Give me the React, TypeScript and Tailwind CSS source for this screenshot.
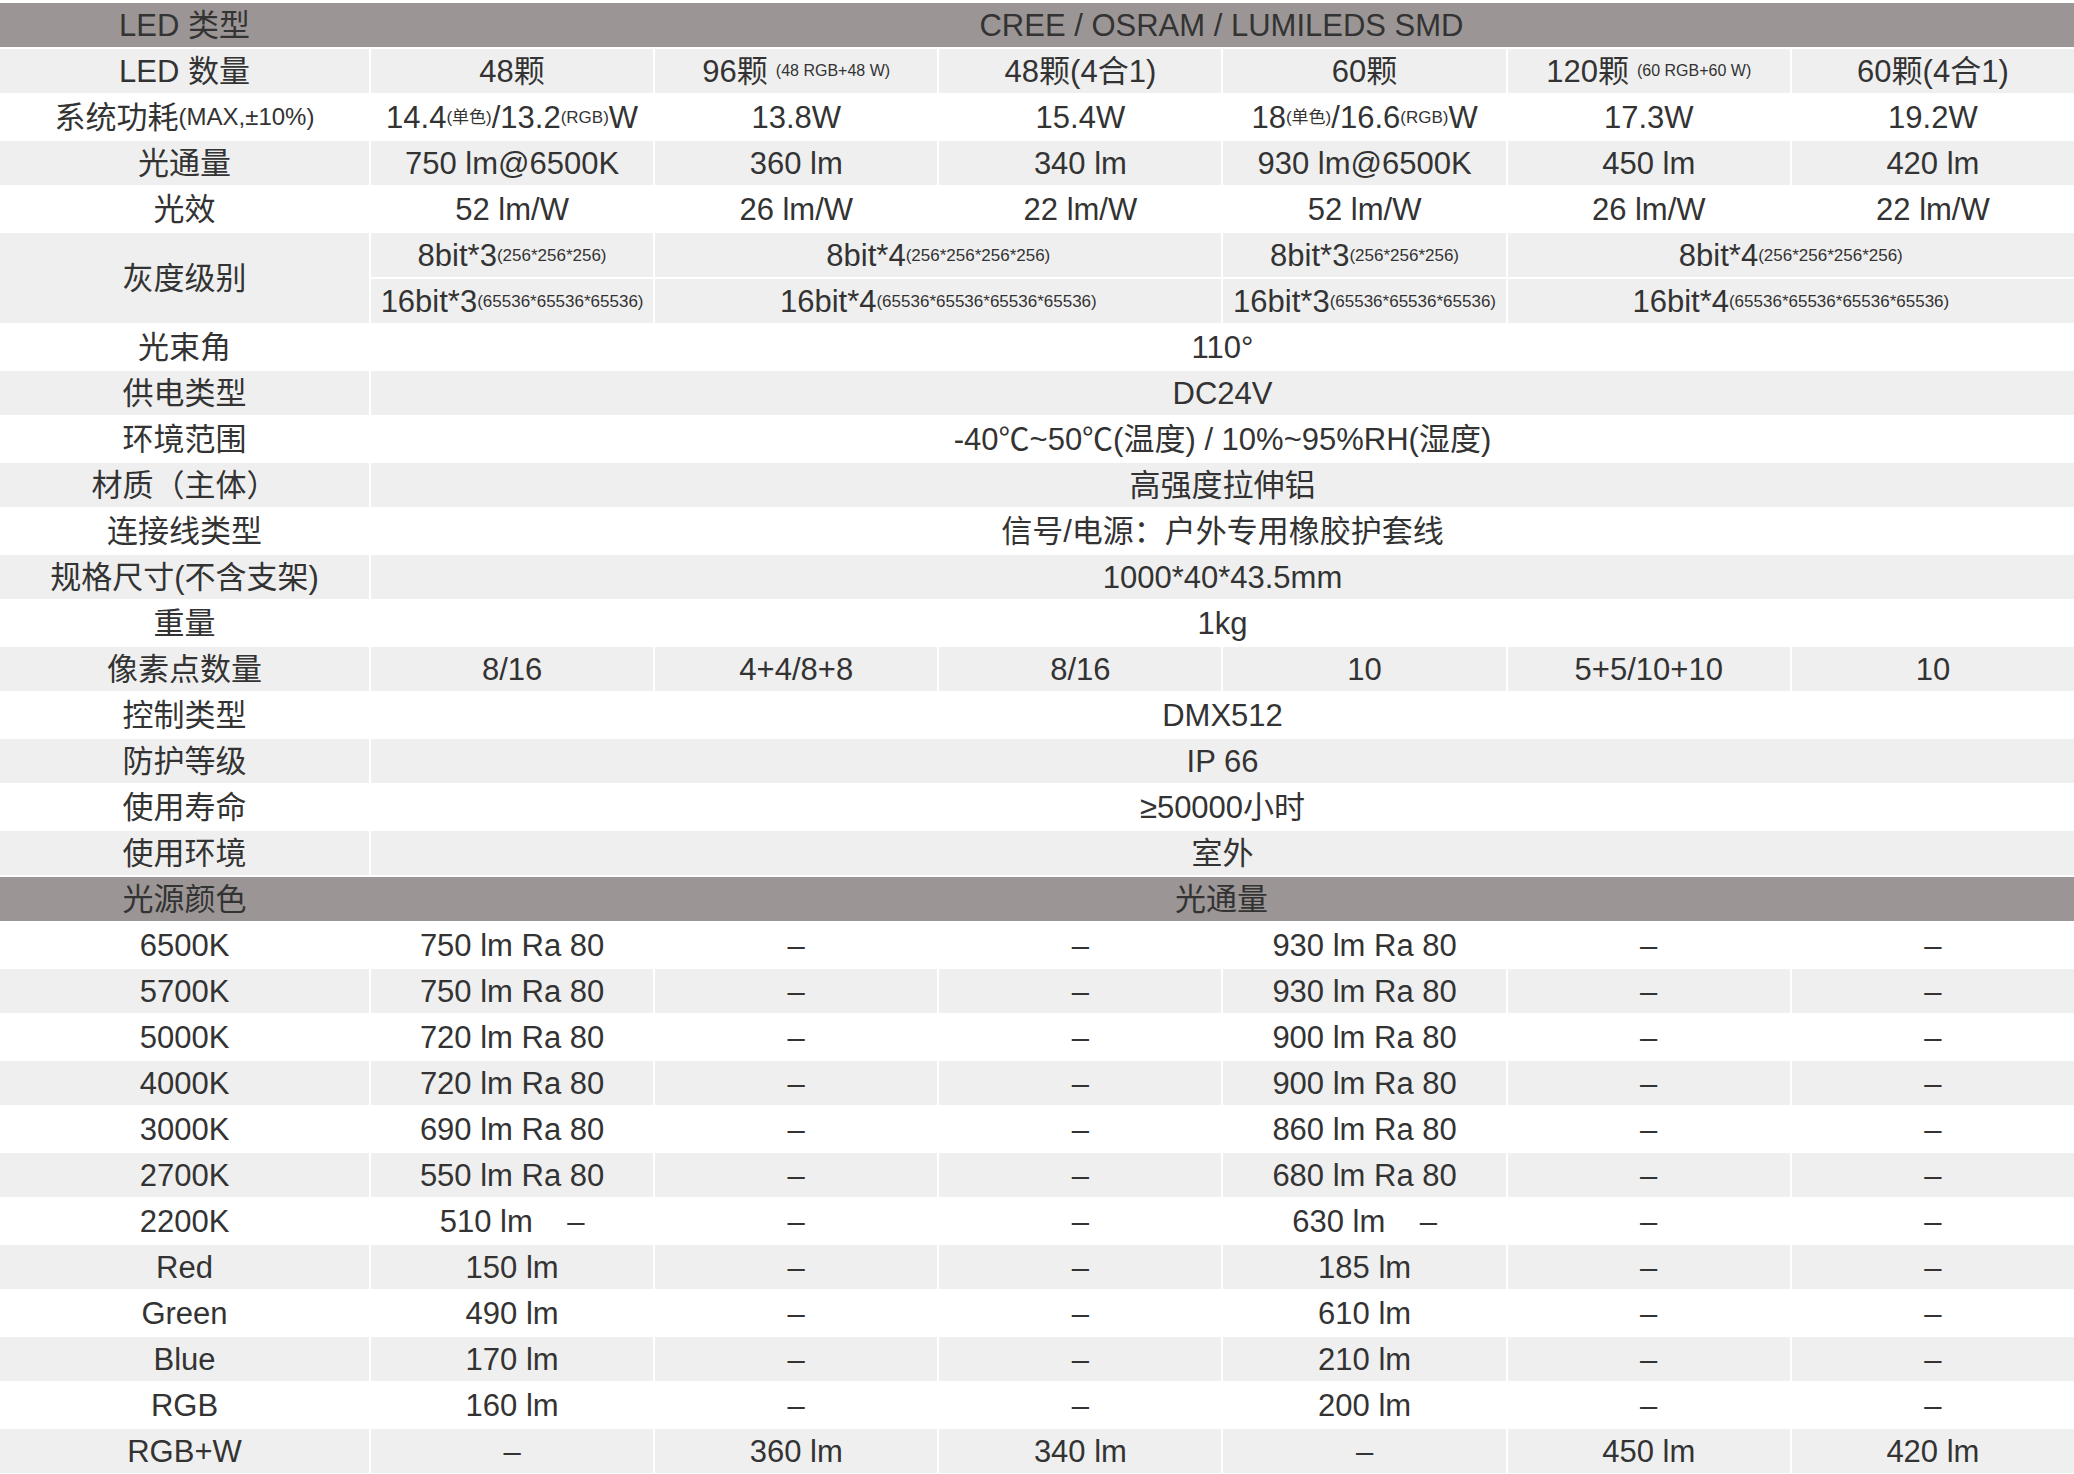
import React from 'react';

const G = 'bg-[#efefef]';
const W = 'bg-white';

type Cell = { t: React.ReactNode; span?: number };
type Row = { label: string; cells: Cell[]; bg: string };

const s = (t: string) => <span className="text-[17px]">{t}</span>;

const rows: Row[] = [
    { label: 'LED 数量', bg: G, cells: [{ t: '48颗' }, { t: <>96颗 <span className="text-[16px] ml-2">(48 RGB+48 W)</span></> }, { t: '48颗(4合1)' }, { t: '60颗' }, { t: <>120颗 <span className="text-[16px] ml-2">(60 RGB+60 W)</span></> }, { t: '60颗(4合1)' }] },
    { label: '系统功耗', bg: W, cells: [{ t: <>14.4{s('(单色)')}/13.2{s('(RGB)')}W</> }, { t: '13.8W' }, { t: '15.4W' }, { t: <>18{s('(单色)')}/16.6{s('(RGB)')}W</> }, { t: '17.3W' }, { t: '19.2W' }] },
    { label: '光通量', bg: G, cells: [{ t: '750 lm@6500K' }, { t: '360 lm' }, { t: '340 lm' }, { t: '930 lm@6500K' }, { t: '450 lm' }, { t: '420 lm' }] },
    { label: '光效', bg: W, cells: [{ t: '52 lm/W' }, { t: '26 lm/W' }, { t: '22 lm/W' }, { t: '52 lm/W' }, { t: '26 lm/W' }, { t: '22 lm/W' }] },
];

const single: [string, string, string][] = [
    ['光束角', '110°', W],
    ['供电类型', 'DC24V', G],
    ['环境范围', '-40℃~50℃(温度) / 10%~95%RH(湿度)', W],
    ['材质（主体）', '高强度拉伸铝', G],
    ['连接线类型', '信号/电源：户外专用橡胶护套线', W],
    ['规格尺寸(不含支架)', '1000*40*43.5mm', G],
    ['重量', '1kg', W],
];

const single2: [string, string, string][] = [
    ['控制类型', 'DMX512', W],
    ['防护等级', 'IP 66', G],
    ['使用寿命', '≥50000小时', W],
    ['使用环境', '室外', G],
];

const flux: [string, string[]][] = [
    ['6500K', ['750 lm Ra 80', '–', '–', '930 lm Ra 80', '–', '–']],
    ['5700K', ['750 lm Ra 80', '–', '–', '930 lm Ra 80', '–', '–']],
    ['5000K', ['720 lm Ra 80', '–', '–', '900 lm Ra 80', '–', '–']],
    ['4000K', ['720 lm Ra 80', '–', '–', '900 lm Ra 80', '–', '–']],
    ['3000K', ['690 lm Ra 80', '–', '–', '860 lm Ra 80', '–', '–']],
    ['2700K', ['550 lm Ra 80', '–', '–', '680 lm Ra 80', '–', '–']],
    ['2200K', ['510 lm\u00a0\u00a0\u00a0\u00a0–', '–', '–', '630 lm\u00a0\u00a0\u00a0\u00a0–', '–', '–']],
    ['Red', ['150 lm', '–', '–', '185 lm', '–', '–']],
    ['Green', ['490 lm', '–', '–', '610 lm', '–', '–']],
    ['Blue', ['170 lm', '–', '–', '210 lm', '–', '–']],
    ['RGB', ['160 lm', '–', '–', '200 lm', '–', '–']],
    ['RGB+W', ['–', '360 lm', '340 lm', '–', '450 lm', '420 lm']],
];

const cellCls = 'h-[44px] flex items-center justify-center whitespace-nowrap';

function Header({ label, text }: { label: string; text: string }) {
    return (
        <div className="col-span-7 h-[44px] bg-[#9b9695] grid grid-cols-[369px_1fr] items-center">
            <div className="text-center">{label}</div>
            <div className="text-center">{text}</div>
        </div>
    );
}

function Single({ label, text, bg }: { label: string; text: string; bg: string }) {
    return (
        <>
            <div className={`${cellCls} ${bg}`}>{label}</div>
            <div className={`${cellCls} ${bg} col-span-6`}>{text}</div>
        </>
    );
}

export default function App() {
    return (
        <div
            className="w-[2074px] pt-[3px] bg-white text-[#333] text-[31px] leading-none"
            style={{ fontFamily: '"Liberation Sans", "Noto Sans CJK SC", sans-serif' }}
        >
            <div className="grid grid-cols-[369px_repeat(6,1fr)] gap-[2px]">
                <Header label="LED 类型" text="CREE / OSRAM / LUMILEDS SMD" />
                {rows.map((r) => (
                    <React.Fragment key={r.label}>
                        <div className={`${cellCls} ${r.bg}`}>
                            {r.label === '系统功耗' ? <>系统功耗<span className="text-[24px]">(MAX,±10%)</span></> : r.label}
                        </div>
                        {r.cells.map((c, i) => (
                            <div key={i} className={`${cellCls} ${r.bg}`}>{c.t}</div>
                        ))}
                    </React.Fragment>
                ))}
                {/* 灰度级别: two sub rows */}
                <div className={`row-span-2 flex items-center justify-center ${G}`}>灰度级别</div>
                <div className={`${cellCls} ${G}`}>8bit*3{s('(256*256*256)')}</div>
                <div className={`${cellCls} ${G} col-span-2`}>8bit*4{s('(256*256*256*256)')}</div>
                <div className={`${cellCls} ${G}`}>8bit*3{s('(256*256*256)')}</div>
                <div className={`${cellCls} ${G} col-span-2`}>8bit*4{s('(256*256*256*256)')}</div>
                <div className={`${cellCls} ${G}`}>16bit*3{s('(65536*65536*65536)')}</div>
                <div className={`${cellCls} ${G} col-span-2`}>16bit*4{s('(65536*65536*65536*65536)')}</div>
                <div className={`${cellCls} ${G}`}>16bit*3{s('(65536*65536*65536)')}</div>
                <div className={`${cellCls} ${G} col-span-2`}>16bit*4{s('(65536*65536*65536*65536)')}</div>
                {single.map(([l, t, bg]) => <Single key={l} label={l} text={t} bg={bg} />)}
                <div className={`${cellCls} ${G}`}>像素点数量</div>
                {['8/16', '4+4/8+8', '8/16', '10', '5+5/10+10', '10'].map((t, i) => (
                    <div key={i} className={`${cellCls} ${G}`}>{t}</div>
                ))}
                {single2.map(([l, t, bg]) => <Single key={l} label={l} text={t} bg={bg} />)}
                <Header label="光源颜色" text="光通量" />
                {flux.map(([l, vals], ri) => {
                    const bg = ri % 2 === 0 ? W : G;
                    return (
                        <React.Fragment key={l}>
                            <div className={`${cellCls} ${bg}`}>{l}</div>
                            {vals.map((v, i) => (
                                <div key={i} className={`${cellCls} ${bg}`}>{v}</div>
                            ))}
                        </React.Fragment>
                    );
                })}
            </div>
        </div>
    );
}
